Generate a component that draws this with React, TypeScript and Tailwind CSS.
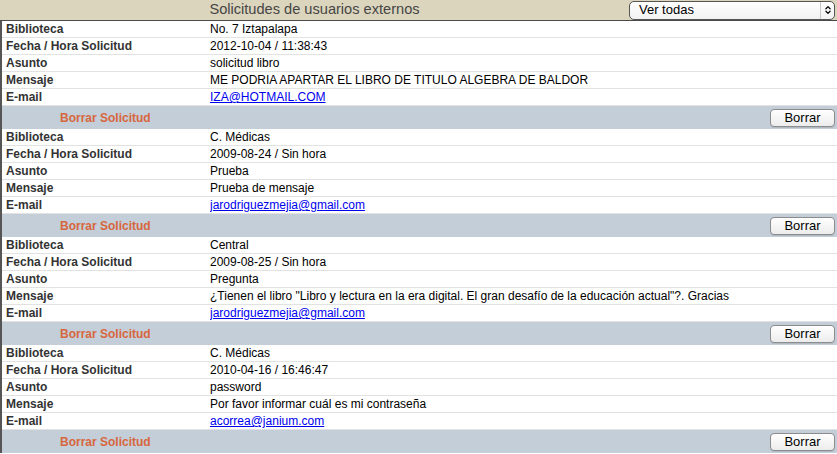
import { ChevronsUpDown } from 'lucide-react'

type Solicitud = {
  biblioteca: string
  fecha: string
  asunto: string
  mensaje: string
  email: string
}

const SOLICITUDES: Solicitud[] = [
  {
    biblioteca: 'No. 7 Iztapalapa',
    fecha: '2012-10-04 / 11:38:43',
    asunto: 'solicitud libro',
    mensaje: 'ME PODRIA APARTAR EL LIBRO DE TITULO ALGEBRA DE BALDOR',
    email: 'IZA@HOTMAIL.COM',
  },
  {
    biblioteca: 'C. Médicas',
    fecha: '2009-08-24 / Sin hora',
    asunto: 'Prueba',
    mensaje: 'Prueba de mensaje',
    email: 'jarodriguezmejia@gmail.com',
  },
  {
    biblioteca: 'Central',
    fecha: '2009-08-25 / Sin hora',
    asunto: 'Pregunta',
    mensaje: '¿Tienen el libro "Libro y lectura en la era digital. El gran desafío de la educación actual"?. Gracias',
    email: 'jarodriguezmejia@gmail.com',
  },
  {
    biblioteca: 'C. Médicas',
    fecha: '2010-04-16 / 16:46:47',
    asunto: 'password',
    mensaje: 'Por favor informar cuál es mi contraseña',
    email: 'acorrea@janium.com',
  },
]

function Row({ label, children }: { label: string; children: React.ReactNode }) {
  return (
    <div className="flex h-[17px] items-center border-b border-[#e2e2e2] bg-white">
      <div className="w-[208px] shrink-0 pl-[4px] font-bold text-[#333]">{label}</div>
      <div className="flex-1 truncate text-black">{children}</div>
    </div>
  )
}

function Block({ s }: { s: Solicitud }) {
  return (
    <div>
      <Row label="Biblioteca">{s.biblioteca}</Row>
      <Row label="Fecha / Hora Solicitud">{s.fecha}</Row>
      <Row label="Asunto">{s.asunto}</Row>
      <Row label="Mensaje">{s.mensaje}</Row>
      <Row label="E-mail">
        <a href="#" className="text-[#0000ee] underline">{s.email}</a>
      </Row>
      <div className="flex h-[23px] items-center bg-[#c3ced9]">
        <span className="pl-[58px] font-bold text-[#d8663d]">Borrar Solicitud</span>
        <button className="ml-auto mr-[2px] h-[18px] w-[65px] rounded-[4px] border border-[#8c8c8c] bg-gradient-to-b from-white to-[#ececec] text-[13px] leading-none text-black shadow-[0_1px_0_rgba(0,0,0,0.1)]">
          Borrar
        </button>
      </div>
    </div>
  )
}

export default function App() {
  return (
    <div
      className="w-[837px] h-[454px] overflow-hidden bg-white text-[12px]"
      style={{ fontFamily: '"Liberation Sans", Arial, sans-serif' }}
    >
      <div className="flex h-[21px] items-center border-b border-[#4a4a4a] bg-[#dcd5bd]">
        <div className="flex-1 text-center text-[14.6px] text-[#454545]">Solicitudes de usuarios externos</div>
        <div className="mr-[2px] flex h-[19px] w-[206px] items-center rounded-[5px] border border-[#555] bg-gradient-to-b from-white to-[#f2f2f2]">
          <span className="flex-1 pl-[9px] text-[13px] text-black">Ver todas</span>
          <div className="flex h-full w-[14px] items-center justify-center border-l border-[#c8c8c8]">
            <ChevronsUpDown size={10} strokeWidth={3} className="text-black" />
          </div>
        </div>
      </div>
      <div className="border-l-2 border-[#555]">
        {SOLICITUDES.map((s, i) => (
          <Block key={i} s={s} />
        ))}
      </div>
    </div>
  )
}
